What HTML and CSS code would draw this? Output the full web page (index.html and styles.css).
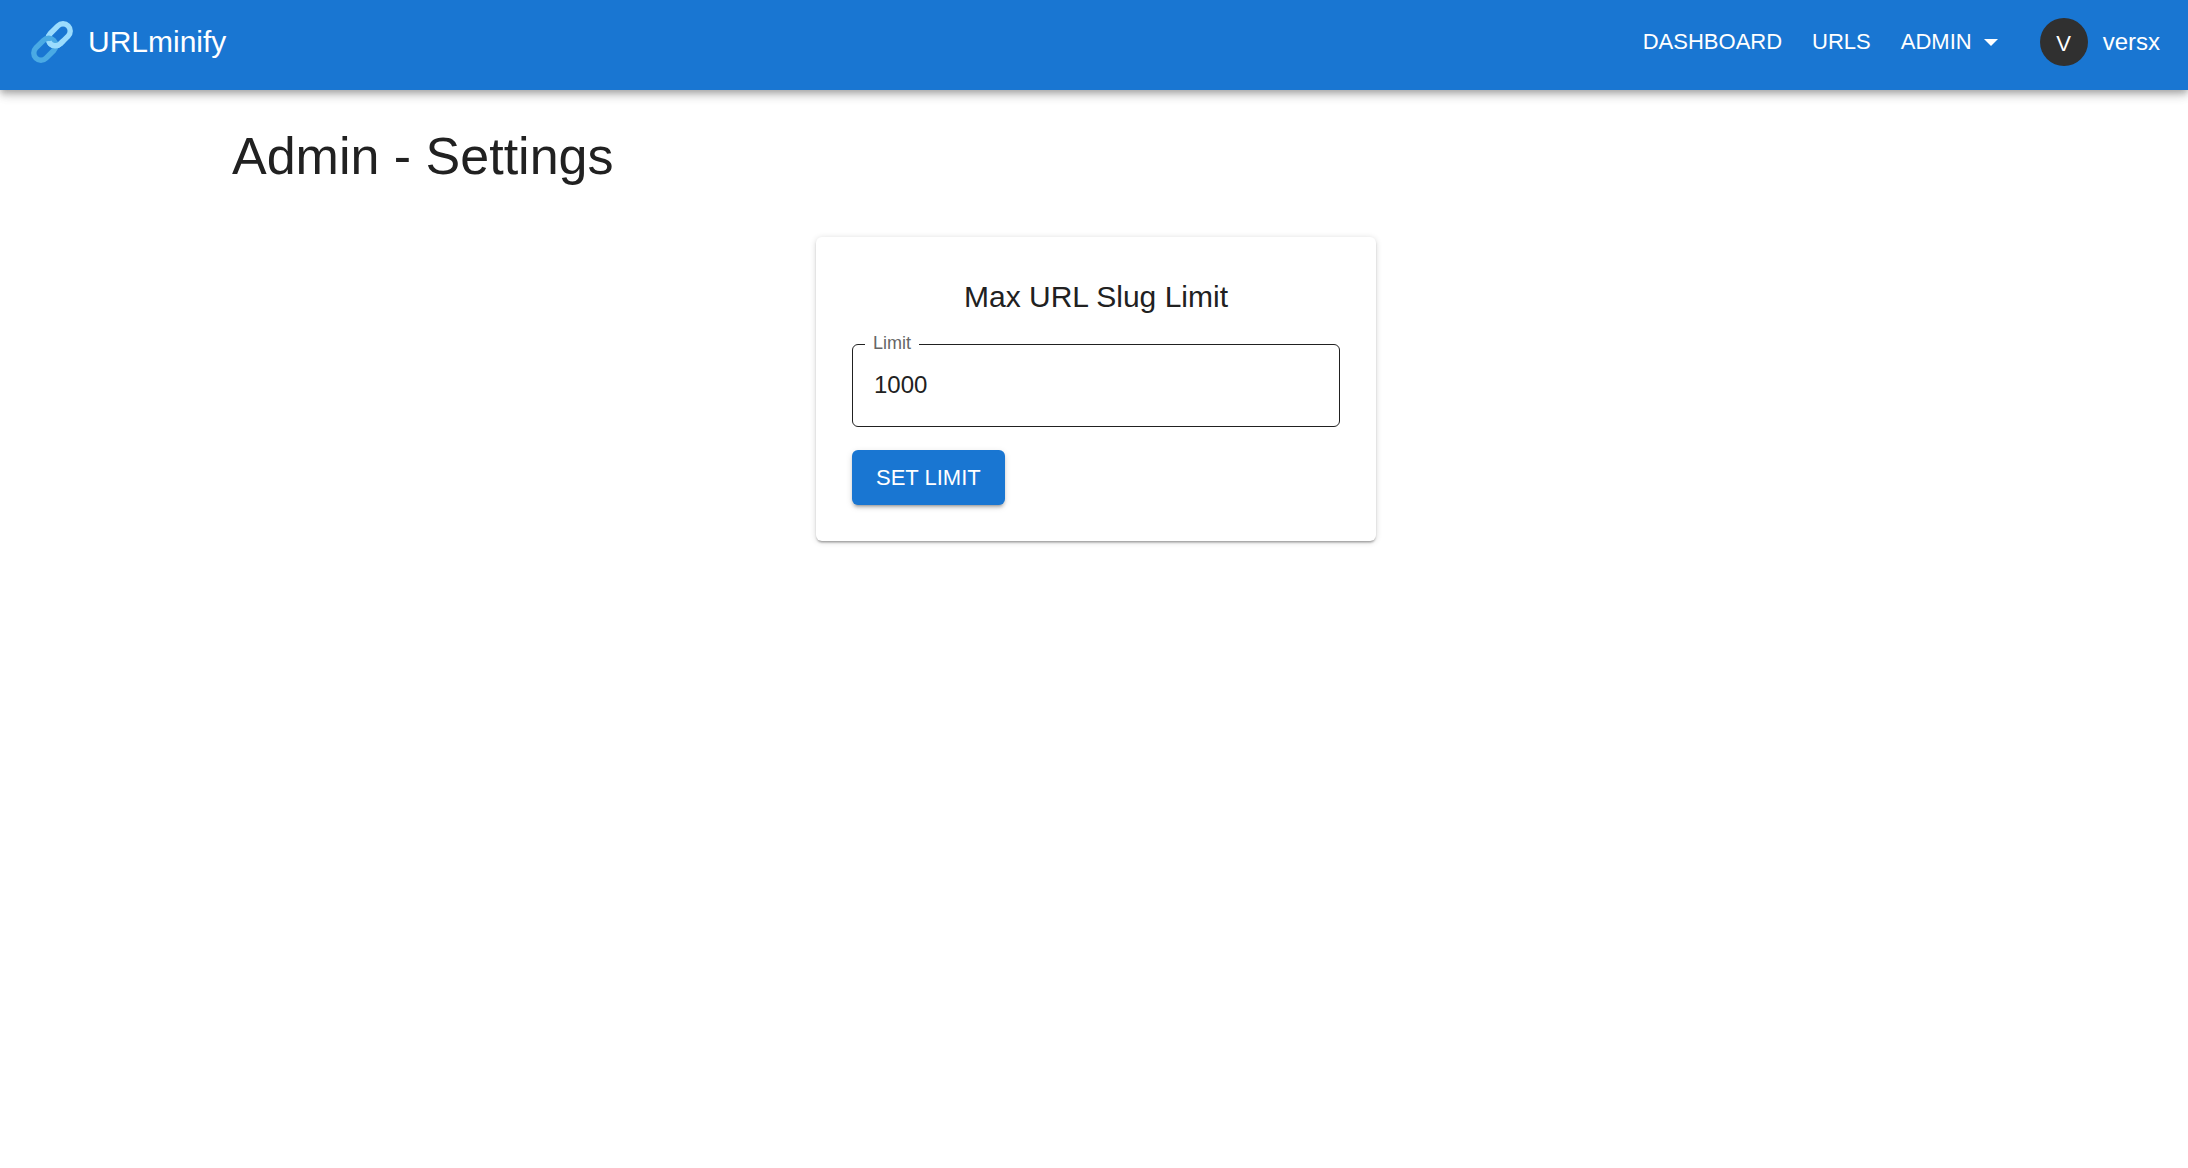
FILE: index.html
```html
<!DOCTYPE html>
<html lang="en">
<head>
<meta charset="utf-8">
<meta name="viewport" content="width=device-width, initial-scale=1">
<title>URLminify</title>
<link rel="stylesheet" href="styles.css">
</head>
<body>
<header class="app-bar">
  <a class="brand" href="#">
    <svg class="brand-icon" viewBox="0 0 42 42" fill="none" stroke-width="5.4" aria-hidden="true">
      <rect class="link-light" x="-12.600" y="-7.200" width="25.200" height="14.400" rx="7.200" transform="translate(28.200 13.800) rotate(-45)"/>
      <rect class="link-dark" x="-12.600" y="-7.200" width="25.200" height="14.400" rx="7.200" transform="translate(13.800 28.200) rotate(-45)"/>
      <path class="link-light" d="M17.900 20.600A7.200 7.200 0 0 0 29.500 22.700L32.500 19.700"/>
    </svg>
    <span>URLminify</span>
  </a>
  <nav class="nav">
    <a class="nav-link" href="#">DASHBOARD</a>
    <a class="nav-link" href="#">URLS</a>
    <button class="nav-link" type="button">ADMIN
      <svg class="caret" viewBox="0 0 14 7" aria-hidden="true"><path d="M0 0h14L7 7z"/></svg>
    </button>
    <button class="account" type="button"><span class="avatar">V</span>versx</button>
  </nav>
</header>
<main class="container">
  <h1 class="page-title">Admin - Settings</h1>
  <form class="card">
    <h2 class="card-title">Max URL Slug Limit</h2>
    <fieldset class="field">
      <legend class="field-legend"><label for="limit">Limit</label></legend>
      <input class="field-input" id="limit" type="text" inputmode="numeric" value="1000">
    </fieldset>
    <button class="submit" type="button">SET LIMIT</button>
  </form>
</main>
</body>
</html>
```
FILE: styles.css
```css
* { box-sizing: border-box; }

body {
  margin: 0;
  background: #fff;
  color: #212121;
  font-family: "Liberation Sans", Arial, sans-serif;
}

button, input { font: inherit; color: inherit; }

button {
  border: 0;
  background: none;
  cursor: pointer;
}

.app-bar {
  display: flex;
  align-items: center;
  justify-content: space-between;
  height: 90px;
  padding: 0 27px 6px 31px;
  background: #1976d2;
  color: #fff;
  box-shadow: 0 3px 6px -1px rgba(0, 0, 0, .2), 0 6px 8px rgba(0, 0, 0, .14), 0 1px 15px rgba(0, 0, 0, .12);
}

.brand {
  display: flex;
  align-items: center;
  gap: 15px;
  color: inherit;
  font-size: 30px;
  line-height: 48px;
  text-decoration: none;
}

.brand-icon { width: 42px; height: 42px; }
.link-light { stroke: #9bdcfd; }
.link-dark { stroke: #4aaae4; }

.nav {
  display: flex;
  align-items: center;
  gap: 30px;
}

.nav-link {
  display: flex;
  align-items: center;
  gap: 12px;
  padding: 0;
  color: inherit;
  font-size: 22px;
  line-height: 36px;
  text-decoration: none;
}

.caret { width: 14px; height: 7px; fill: currentColor; }

.account {
  display: flex;
  align-items: center;
  gap: 15px;
  margin-left: 12px;
  padding: 0 1px 0 0;
  font-size: 24px;
  line-height: 36px;
}

.avatar {
  width: 48px;
  height: 48px;
  border-radius: 50%;
  background: #303030;
  font-size: 22px;
  line-height: 52px;
  text-align: center;
}

.container {
  max-width: 1800px;
  margin: 0 auto;
  padding: 36px 34px 36px 38px;
}

.page-title {
  margin: 0;
  font-size: 52px;
  font-weight: 400;
  line-height: 60px;
}

.card {
  max-width: 560px;
  margin: 51px auto 0;
  padding: 36px;
  border-radius: 6px;
  box-shadow: 0 3px 2px -2px rgba(0, 0, 0, .2), 0 2px 2px rgba(0, 0, 0, .14), 0 1px 6px rgba(0, 0, 0, .16);
}

.card-title {
  margin: 0 0 12px;
  font-size: 30px;
  font-weight: 400;
  line-height: 48px;
  text-align: center;
}

.field {
  margin: 0;
  padding: 0 12px;
  border: 1px solid #212121;
  border-radius: 6px;
}

.field-legend {
  padding: 0 8px 2px;
  color: #666;
  font-size: 18px;
  line-height: 20px;
}

.field-input {
  display: block;
  width: 100%;
  height: 71px;
  padding: 0 9px 12px;
  border: 0;
  outline: 0;
  background: none;
  font-size: 24px;
}

.submit {
  margin-top: 23px;
  padding: 9px 24px;
  border-radius: 6px;
  background: #1976d2;
  color: #fff;
  font-size: 22px;
  line-height: 37px;
  box-shadow: 0 4px 2px -3px rgba(0, 0, 0, .2), 0 3px 3px rgba(0, 0, 0, .14), 0 2px 7px rgba(0, 0, 0, .12);
}
```
